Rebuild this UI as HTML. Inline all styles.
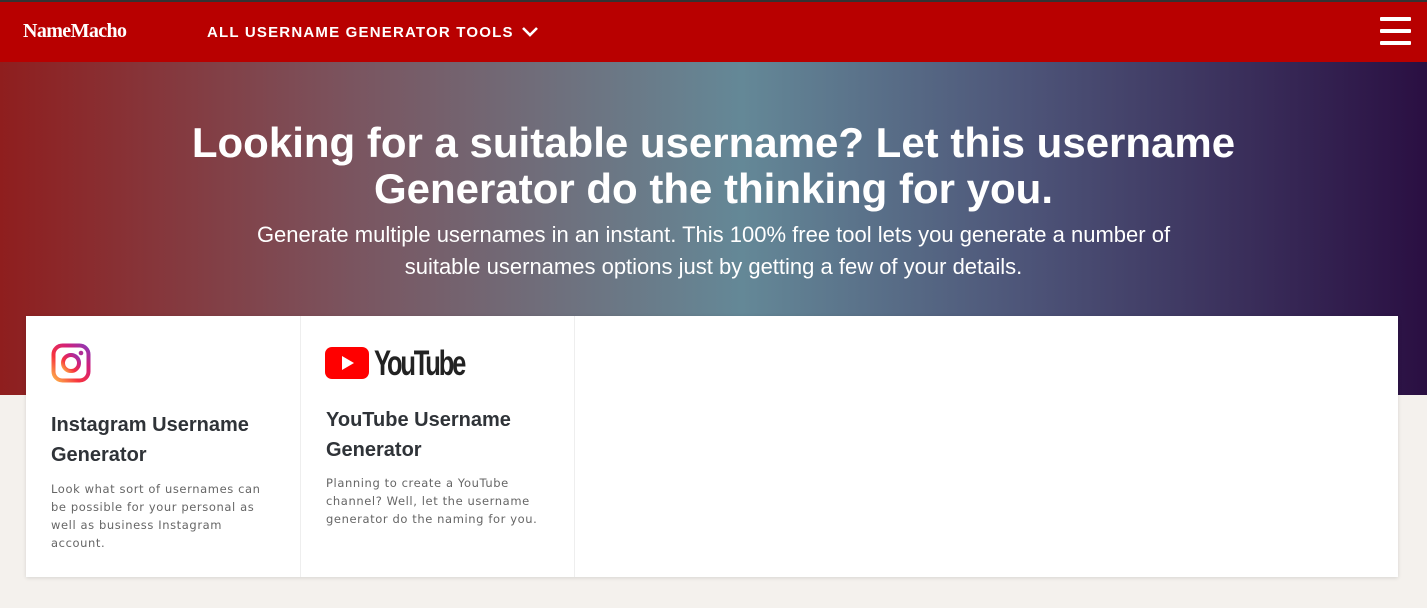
<!DOCTYPE html>
<html><head><style>
*{margin:0;padding:0;box-sizing:border-box}
body{width:1427px;height:608px;overflow:hidden;background:#f4f1ed;font-family:"Liberation Sans",sans-serif;position:relative}
.top{position:absolute;top:0;left:0;width:1427px;height:2px;background:#333}
nav{position:absolute;top:2px;left:0;width:1427px;height:60px;background:#b80000;color:#fff}
.logo{position:absolute;left:23px;top:18px;font-family:"Liberation Serif",serif;font-size:20px;font-weight:bold;letter-spacing:-0.6px}
.menu{position:absolute;left:207px;top:22px;font-weight:bold;font-size:15px;letter-spacing:1.2px}
.menu svg{position:absolute;left:314px;top:1px}
.hb{position:absolute;left:1380px;width:31px;height:4px;background:#fff;border-radius:1px}
.hero{position:absolute;top:62px;left:0;width:1427px;height:333px;background:linear-gradient(90deg,#8f1e1e 0%,#7a5560 25%,#648897 52%,#4d5478 72%,#2a0f42 100%);color:#fff;text-align:center}
h1{position:absolute;top:58px;left:0;width:1427px;font-size:42px;line-height:46px;font-weight:bold}
.sub{position:absolute;top:157px;left:0;width:1427px;font-size:22px;line-height:32px}
.card{position:absolute;top:316px;left:26px;width:1372px;height:261px;background:#fff;box-shadow:0 1px 4px rgba(0,0,0,.12)}
.col{position:absolute;top:0;height:261px;border-right:1px solid #eee}
.col h3{position:absolute;left:25px;font-size:20px;line-height:30px;color:#2f3338;font-weight:bold}
.col p{position:absolute;left:25px;font-family:"DejaVu Sans",sans-serif;font-size:11.5px;line-height:18px;color:#666;letter-spacing:0.6px;width:222px}
</style></head><body>
<div class="top"></div>
<nav><div class="logo">NameMacho</div>
<div class="menu">ALL USERNAME GENERATOR TOOLS<svg width="18" height="14" viewBox="0 0 18 14"><path d="M2 3l7 7 7-7" stroke="#fff" stroke-width="2.6" fill="none"/></svg></div>
<div class="hb" style="top:15px"></div><div class="hb" style="top:27px"></div><div class="hb" style="top:39px"></div>
</nav>
<div class="hero">
<h1>Looking for a suitable username? Let this username<br>Generator do the thinking for you.</h1>
<div class="sub">Generate multiple usernames in an instant. This 100% free tool lets you generate a number of<br>suitable usernames options just by getting a few of your details.</div>
</div>
<div class="card">
<div class="col" style="left:0;width:275px">
<svg style="position:absolute;left:25px;top:27px" width="40" height="40" viewBox="0 0 40 40"><defs><linearGradient id="ig" x1="0" y1="1" x2="1" y2="0"><stop offset="0" stop-color="#fdb44b"/><stop offset=".35" stop-color="#f7333e"/><stop offset=".7" stop-color="#d1207b"/><stop offset="1" stop-color="#8a3ab9"/></linearGradient></defs><rect x="2.5" y="2.5" width="35" height="35" rx="9" fill="none" stroke="url(#ig)" stroke-width="4"/><circle cx="20" cy="20" r="8" fill="none" stroke="url(#ig)" stroke-width="4"/><circle cx="30" cy="10" r="2.3" fill="#b02d96"/></svg>
<h3 style="top:94px">Instagram Username<br>Generator</h3>
<p style="top:164px">Look what sort of usernames can be possible for your personal as well as business Instagram account.</p>
</div>
<div class="col" style="left:275px;width:274px">
<svg style="position:absolute;left:24px;top:31px" width="44" height="32" viewBox="0 0 44 32"><rect x="0" y="0" width="44" height="32" rx="7" fill="#f00"/><path d="M17 9l12 7-12 7z" fill="#fff"/></svg>
<div style="position:absolute;left:73px;top:28px;font-size:35px;font-weight:bold;letter-spacing:-3px;color:#222;transform:scaleX(0.73);transform-origin:left">YouTube</div>
<h3 style="top:89px">YouTube Username<br>Generator</h3>
<p style="top:158px">Planning to create a YouTube channel? Well, let the username generator do the naming for you.</p>
</div>
</div>
</body></html>
